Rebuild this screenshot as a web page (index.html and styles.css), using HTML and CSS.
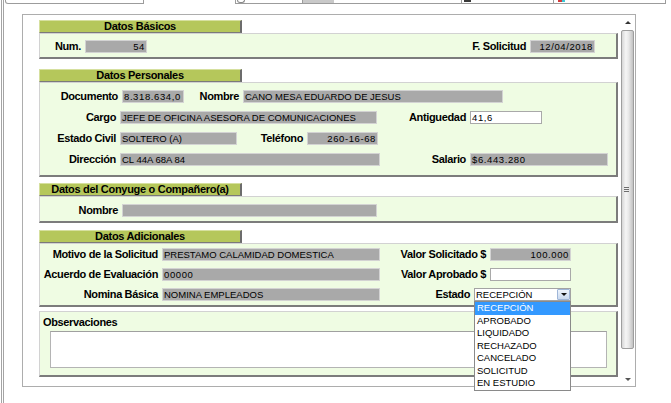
FILE: index.html
```html
<!DOCTYPE html>
<html lang="es">
<head>
<meta charset="utf-8">
<title>Solicitud</title>
<link rel="stylesheet" href="styles.css">
</head>
<body>
<div class="screen">
  <div class="rail"></div>
  <div class="main">
    <div class="topstrip">
      <div class="strip-a"></div>
      <div class="strip-b">
        <div class="seg seg-1"><span class="ico-circle"></span></div>
        <div class="seg seg-2"><span class="ico-bar"></span></div>
        <div class="seg seg-3"><span class="ico-dark"></span></div>
        <div class="seg seg-4"><span class="ico-color"></span></div>
      </div>
    </div>
    <div class="frame">
      <div class="content">
        <section class="section s1">
          <div class="tab">Datos Básicos</div>
          <div class="panel p1">
            <div class="row">
              <span class="lbl w45">Num.</span>
              <span class="fld w62 right digits">54</span>
              <span class="lbl w383">F. Solicitud</span>
              <span class="fld w65 right digits">12/04/2018</span>
            </div>
          </div>
        </section>

        <section class="section s2">
          <div class="tab">Datos Personales</div>
          <div class="panel p2">
            <div class="row">
              <span class="lbl w82">Documento</span>
              <span class="fld w62 digits">8.318.634,0</span>
              <span class="lbl w59">Nombre</span>
              <span class="fld w260">CANO MESA EDUARDO DE JESUS</span>
            </div>
            <div class="row">
              <span class="lbl w80">Cargo</span>
              <span class="fld w257">JEFE DE OFICINA ASESORA DE COMUNICACIONES</span>
              <span class="lbl w93">Antiguedad</span>
              <span class="fld w72 white digits">41,6</span>
            </div>
            <div class="row">
              <span class="lbl w80">Estado Civil</span>
              <span class="fld w117">SOLTERO (A)</span>
              <span class="lbl w70">Teléfono</span>
              <span class="fld w71 right digits">260-16-68</span>
            </div>
            <div class="row">
              <span class="lbl w80">Dirección</span>
              <span class="fld w260">CL 44A 68A 84</span>
              <span class="lbl w90">Salario</span>
              <span class="fld w138 digits">$6.443.280</span>
            </div>
          </div>
        </section>

        <section class="section s3">
          <div class="tab">Datos del Conyuge o Compañero(a)</div>
          <div class="panel p3">
            <div class="row">
              <span class="lbl w82">Nombre</span>
              <span class="fld w255"></span>
            </div>
          </div>
        </section>

        <section class="section s4">
          <div class="tab">Datos Adicionales</div>
          <div class="panel p4">
            <div class="row">
              <span class="lbl w122">Motivo de la Solicitud</span>
              <span class="fld w218">PRESTAMO CALAMIDAD DOMESTICA</span>
              <span class="lbl w110">Valor Solicitado $</span>
              <span class="fld w81 right digits">100.000</span>
            </div>
            <div class="row">
              <span class="lbl w122">Acuerdo de Evaluación</span>
              <span class="fld w218 digits">00000</span>
              <span class="lbl w110">Valor Aprobado $</span>
              <span class="fld w81 white"></span>
            </div>
            <div class="row">
              <span class="lbl w122">Nomina Básica</span>
              <span class="fld w218">NOMINA EMPLEADOS</span>
              <span class="lbl w94">Estado</span>
              <div class="combo w97">
                <span class="combo-val">RECEPCIÓN</span>
                <span class="combo-btn"><span class="tri-down"></span></span>
                <ul class="combo-list">
                  <li class="sel">RECEPCIÓN</li>
                  <li>APROBADO</li>
                  <li>LIQUIDADO</li>
                  <li>RECHAZADO</li>
                  <li>CANCELADO</li>
                  <li>SOLICITUD</li>
                  <li>EN ESTUDIO</li>
                </ul>
              </div>
            </div>
          </div>
        </section>

        <section class="section s5">
          <div class="panel p5">
            <div class="obs-label">Observaciones</div>
            <div class="textarea"></div>
          </div>
        </section>
      </div>
      <div class="scrollbar">
        <div class="sb-btn"><span class="tri-up"></span></div>
        <div class="sb-thumb"><span class="grip"></span></div>
        <div class="sb-track"></div>
        <div class="sb-btn"><span class="tri-sb-down"></span></div>
      </div>
    </div>
  </div>
</div>
</body>
</html>
```

FILE: styles.css
```css
* { box-sizing: border-box; }
html, body { margin: 0; padding: 0; background: #fff; }
body { font-family: "Liberation Sans", Arial, sans-serif; color: #000; }

.screen { width: 671px; height: 403px; overflow: hidden; display: flex; position: relative; }
.rail { flex: none; margin-left: 1px; width: 3px; height: 403px; border-left: 1px solid #a4a4a4; border-right: 1px solid #a4a4a4; }
.main { flex: 1; display: flex; flex-direction: column; }

/* cut-off toolbar at the top */
.topstrip { flex: none; height: 4px; display: flex; }
.strip-a { margin-left: 1px; width: 139px; height: 4px; border: 1px solid #9c9c9c; border-top: 0; border-bottom-left-radius: 3px; }
.strip-b { margin-left: 91px; width: 431px; height: 4px; display: flex; border: 1px solid #9c9c9c; border-top: 0; }
.seg { height: 3px; position: relative; display: flex; align-items: flex-end; }
.seg-1 { width: 66px; }
.seg-2 { width: 159px; border-left: 1px solid #9c9c9c; }
.seg-3 { width: 92px; border-left: 1px solid #9c9c9c; }
.seg-4 { flex: 1; border-left: 1px solid #9c9c9c; }
.ico-circle { margin-left: 1px; width: 8px; height: 3px; border: 1px solid #8a8a8a; border-top: 0; border-radius: 0 0 4px 4px; }
.ico-bar { width: 31px; height: 3px; background: #c9c9c9; }
.ico-dark { margin-left: 2px; width: 7px; height: 2px; background: #3a3a3a; align-self: flex-start; }
.ico-color { margin-left: 4px; width: 7px; height: 2px; background: linear-gradient(to right, #d23a3a 50%, #3cc6d6 50%); align-self: flex-start; }

/* main window frame */
.frame { flex: none; margin: 10px 0 0 18px; width: 614px; height: 373px; border: 1px solid #adadad; display: flex; position: relative; }
.content { flex: 1; padding: 5px 3px 0 16px; }

.section { width: 579px; }
.s1 { margin-bottom: 10px; }
.s2 { margin-bottom: 6px; }
.s3 { margin-bottom: 7px; }
.s4 { margin-bottom: 4px; }

.tab {
  width: 203px; height: 13px;
  background: #b5c75b;
  border-top: 1px solid #d6e09f; border-left: 1px solid #d6e09f;
  border-right: 2px solid #6c6c6c; border-bottom: 1px solid #7a7a7a;
  font-weight: bold; font-size: 11px; letter-spacing: -0.3px;
  line-height: 11px; text-align: center; white-space: nowrap;
}
.panel {
  background: #effce3;
  border-top: 1px solid #d2d2d2; border-left: 1px solid #d2d2d2;
  border-right: 2px solid #7c7c7c; border-bottom: 2px solid #7c7c7c;
}
.p1 { height: 26px; padding-top: 6px; }
.p2 { height: 95px; padding-top: 7px; display: flex; flex-direction: column; gap: 8px; }
.p3 { height: 27px; padding-top: 7px; }
.p4 { height: 64px; padding-top: 4px; display: flex; flex-direction: column; gap: 7px; }
.p5 { height: 66px; padding: 4px 0 0 3px; }

.row { display: flex; align-items: center; height: 13px; }
.lbl {
  flex: none; font-weight: bold; font-size: 11px; letter-spacing: -0.35px;
  line-height: 13px; text-align: right; padding-right: 4px; white-space: nowrap;
}
.fld {
  flex: none; height: 13px; background: #a9a9a9;
  border: 1px solid #d3d3d3;
  font-size: 9.5px; line-height: 11px; padding: 0 1px;
  white-space: nowrap; overflow: hidden;
}
.fld.right { text-align: right; }
.fld.white { background: #fff; border-color: #a9a9a9; }
.digits { letter-spacing: 0.6px; }

.w45 { width: 45px; } .w59 { width: 59px; } .w62 { width: 62px; } .w65 { width: 65px; }
.w70 { width: 70px; } .w71 { width: 71px; } .w72 { width: 72px; } .w80 { width: 80px; }
.w81 { width: 81px; } .w82 { width: 82px; } .w90 { width: 90px; } .w93 { width: 93px; }
.w94 { width: 94px; } .w97 { width: 97px; } .w110 { width: 110px; } .w117 { width: 117px; }
.w122 { width: 122px; } .w138 { width: 138px; } .w218 { width: 218px; } .w255 { width: 255px; }
.w257 { width: 257px; } .w260 { width: 260px; } .w383 { width: 383px; }

/* combo box with open list */
.combo { flex: none; position: relative; height: 13px; display: flex; background: #fff; border: 1px solid #a3a3a3; }
.combo-val { flex: 1; font-size: 9.5px; line-height: 11px; padding-left: 1px; white-space: nowrap; }
.combo-btn {
  flex: none; width: 13px; height: 11px;
  background: linear-gradient(#eef4fc, #c9d9ef);
  border: 1px solid #9fb6d8; border-radius: 1px;
  display: flex; align-items: center; justify-content: center;
}
.tri-down { width: 0; height: 0; border-left: 3px solid transparent; border-right: 3px solid transparent; border-top: 3px solid #111; }
.combo-list {
  position: absolute; z-index: 10; top: 12px; left: -1px; width: 97px;
  margin: 0; padding: 0; list-style: none;
  background: #fff; border: 1px solid #8a8a8a;
}
.combo-list li { height: 12.5px; line-height: 12.5px; font-size: 9.5px; padding-left: 2px; white-space: nowrap; }
.combo-list li.sel { background: #3399ff; color: #fff; }

/* observaciones */
.obs-label { font-weight: bold; font-size: 11px; letter-spacing: -0.35px; line-height: 13px; }
.textarea { margin: 2px 0 0 7px; width: 557px; height: 37px; background: #fff; border: 1px solid #b4b4b4; border-top-color: #a0a0a0; }

/* scrollbar */
.scrollbar { flex: none; width: 13px; margin-right: 1px; display: flex; flex-direction: column; }
.sb-btn { flex: none; height: 14px; display: flex; align-items: center; justify-content: center; }
.tri-up { width: 0; height: 0; border-left: 3px solid transparent; border-right: 3px solid transparent; border-bottom: 3px solid #333; }
.tri-sb-down { width: 0; height: 0; border-left: 3px solid transparent; border-right: 3px solid transparent; border-top: 3px solid #555; }
.sb-thumb {
  flex: none; margin-top: 1px; height: 319px;
  border: 1px solid #9e9e9e; border-radius: 2px;
  background: linear-gradient(to right, #d6d6d6, #f5f5f5 35%, #e8e8e8 60%, #c2c2c2);
  display: flex; align-items: center; justify-content: center;
}
.grip { width: 5px; height: 5px; margin-right: 2px; background: repeating-linear-gradient(#6e6e6e 0 1px, transparent 1px 2px); }
.sb-track { flex: 1; }
```
